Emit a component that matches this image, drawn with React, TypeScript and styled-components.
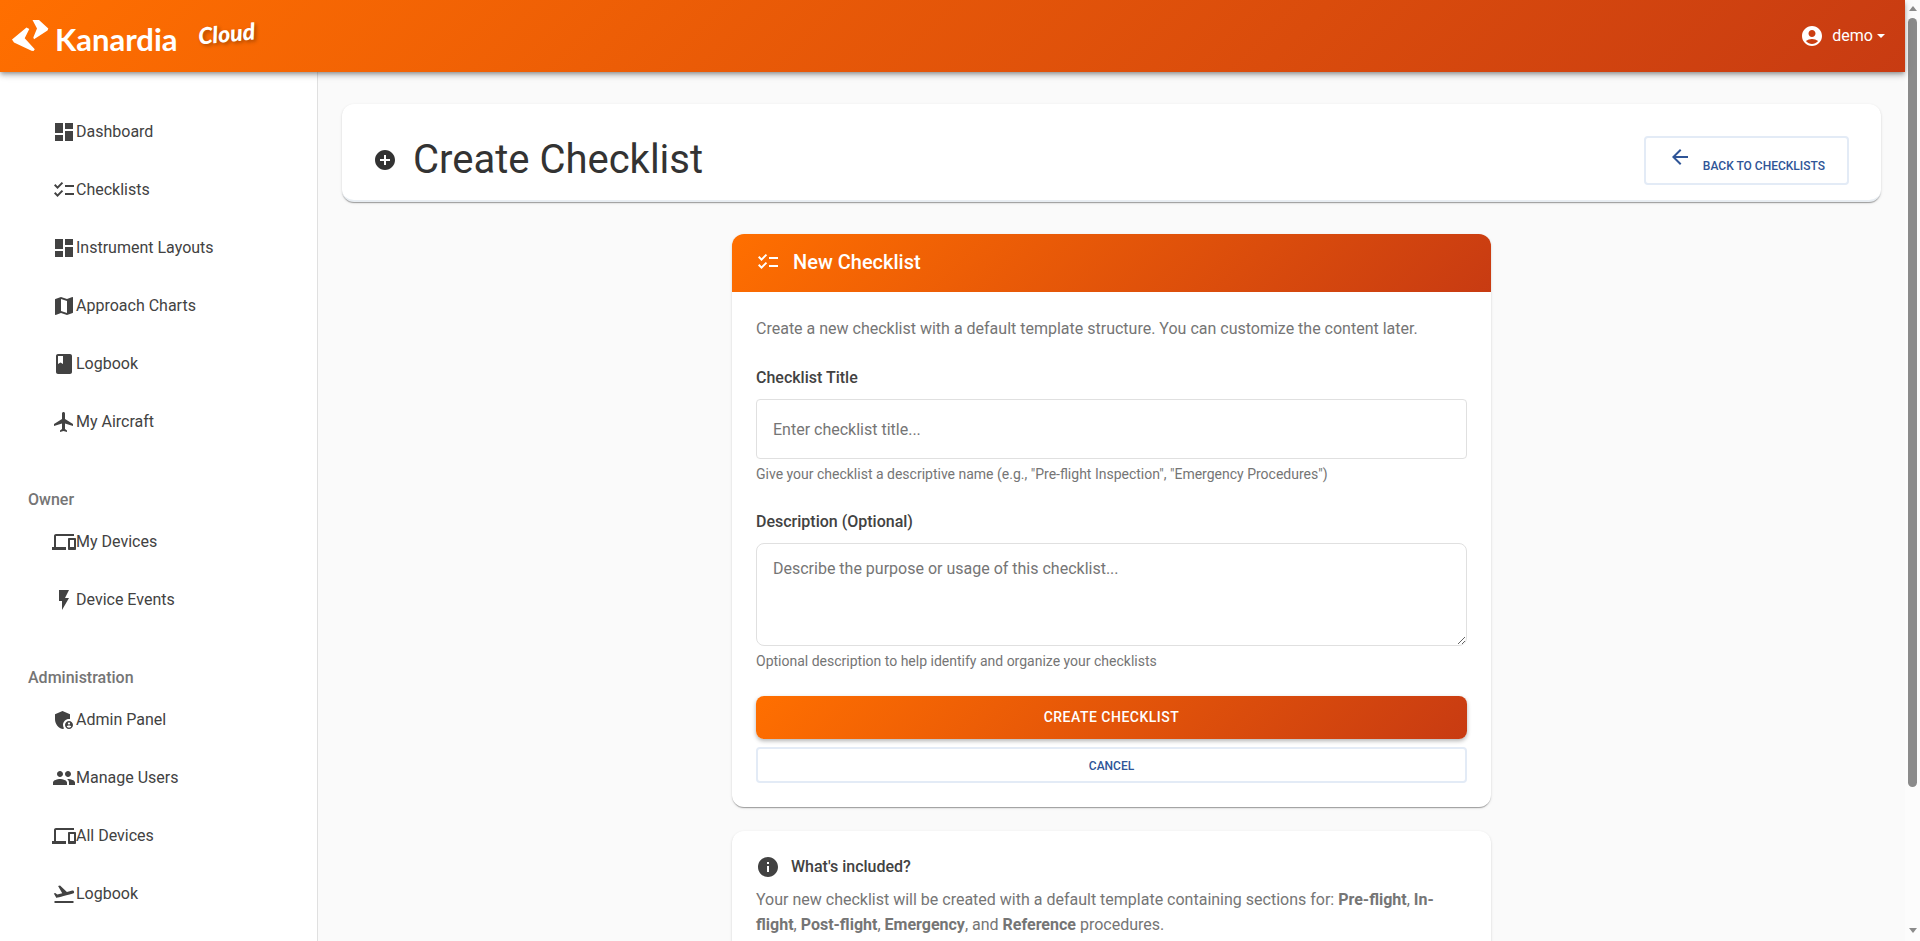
import React from "react";
import styled, { createGlobalStyle, css } from "styled-components";
import {
  MdAccountCircle,
  MdAddCircle,
  MdAdminPanelSettings,
  MdArrowBack,
  MdBook,
  MdChecklist,
  MdDashboard,
  MdDevices,
  MdFlashOn,
  MdFlight,
  MdFlightTakeoff,
  MdGroup,
  MdInfo,
  MdMap,
} from "react-icons/md";
import type { IconType } from "react-icons";

const colors = {
  gradient: "linear-gradient(135deg, #ff6f00 0%, #c83b12 100%)",
  page: "#fafafa",
  text: "#424242",
  heading: "#333333",
  muted: "#757575",
  line: "#e0e0e0",
  outline: "#e3ebf6",
  link: "#2f5597",
};

const GlobalStyle = createGlobalStyle`
  *, *::before, *::after { box-sizing: border-box; }
  body {
    margin: 0;
    background: ${colors.page};
    color: ${colors.text};
    font-family: Roboto, "Liberation Sans", sans-serif;
    font-size: 16px;
    line-height: 26px;
  }
  h1, h2, h3, p, ul { margin: 0; padding: 0; }
  svg { display: block; flex: none; }
`;

const Viewport = styled.div`
  display: grid;
  grid-template-columns: minmax(0, 1fr) 15px;
  height: 100vh;
  overflow: hidden;
`;

const Page = styled.div`
  display: flex;
  flex-direction: column;
  min-height: 0;
`;

const TopBar = styled.header`
  position: relative;
  z-index: 1;
  display: flex;
  flex: none;
  align-items: center;
  justify-content: space-between;
  height: 72px;
  padding: 0 20px 0 12px;
  background: ${colors.gradient};
  color: #fff;
  box-shadow: 0 2px 4px -1px rgba(0, 0, 0, 0.3), 0 4px 5px rgba(0, 0, 0, 0.14), 0 1px 10px rgba(0, 0, 0, 0.12);
`;

const Brand = styled.a`
  display: flex;
  align-items: center;
  color: inherit;
  text-decoration: none;
`;

const BrandName = styled.span`
  margin-left: 6px;
  padding-top: 6px;
  font-family: Lato, sans-serif;
  font-size: 31px;
  font-weight: 700;
  line-height: 36px;
`;

const BrandTag = styled.span`
  margin: 0 0 6px 20px;
  font-family: Lato, sans-serif;
  font-size: 23px;
  font-style: italic;
  font-weight: 900;
  line-height: 26px;
  text-shadow: 2px 2px 4px rgba(0, 0, 0, 0.3);
  transform: rotate(-5deg);
`;

const UserMenu = styled.button`
  display: flex;
  align-items: center;
  gap: 8px;
  padding: 0;
  border: 0;
  background: none;
  color: inherit;
  font: inherit;
`;

const Caret = styled.span`
  margin-left: -4px;
  border: 4px solid transparent;
  border-top-color: currentColor;
  border-bottom: 0;
`;

const Body = styled.div`
  display: grid;
  flex: 1;
  grid-template-columns: 318px minmax(0, 1fr);
  min-height: 0;
  overflow: hidden;
`;

const Sidebar = styled.nav`
  padding-top: 31px;
  border-right: 1px solid ${colors.line};
  background: #fff;
`;

const NavGroup = styled.section`
  & + & { padding-top: 36px; }
`;

const NavHeading = styled.h2`
  padding-left: 28px;
  color: ${colors.muted};
  font-size: 16px;
  font-weight: 500;
  line-height: 26px;
`;

const NavList = styled.ul`
  list-style: none;
`;

const NavLink = styled.a`
  display: flex;
  align-items: center;
  padding: 16px 52px;
  color: ${colors.text};
  text-decoration: none;
`;

const Main = styled.main`
  padding: 32px 24px;
`;

const surface = css`
  border-radius: 12px;
  background: #fff;
  box-shadow: 0 2px 1px -1px rgba(0, 0, 0, 0.2), 0 1px 1px rgba(0, 0, 0, 0.14), 0 1px 3px rgba(0, 0, 0, 0.12);
`;

const PageHeader = styled.header`
  ${surface}
  display: flex;
  align-items: center;
  justify-content: space-between;
  padding: 26px 32px 10px 31px;
  border-bottom: 2px solid #e8edf2;
`;

const PageTitle = styled.h1`
  display: flex;
  align-items: center;
  gap: 16px;
  color: ${colors.heading};
  font-size: 40px;
  font-weight: 400;
  line-height: 60px;
`;

const outlined = css`
  border: 2px solid ${colors.outline};
  border-radius: 4px;
  background: #fff;
  color: ${colors.link};
  font-family: inherit;
  font-size: 12px;
  font-weight: 500;
  text-transform: uppercase;
`;

const BackLink = styled.a`
  ${outlined}
  display: flex;
  gap: 11px;
  padding: 7px 22px;
  line-height: 20px;
  text-decoration: none;
  svg { margin-bottom: 5px; }
  span { padding-top: 11px; }
`;

const Column = styled.div`
  display: flex;
  flex-direction: column;
  gap: 24px;
  width: 100%;
  max-width: 759px;
  margin: 32px auto 0;
`;

const Card = styled.section`
  ${surface}
  overflow: hidden;
`;

const CardHeader = styled.h2`
  display: flex;
  align-items: center;
  gap: 13px;
  padding: 15px 24px 17px;
  background: ${colors.gradient};
  color: #fff;
  font-size: 20px;
  font-weight: 500;
  line-height: 26px;
`;

const CardBody = styled.div`
  padding: 24px;
`;

const Note = styled.p`
  color: ${colors.muted};
  line-height: 25px;
`;

const Form = styled.form`
  display: flex;
  flex-direction: column;
`;

const Field = styled.div`
  display: flex;
  flex-direction: column;
  margin-top: 24px;
`;

const Label = styled.label`
  margin-bottom: 8px;
  font-weight: 500;
`;

const control = css`
  display: block;
  width: 100%;
  border: 1px solid ${colors.line};
  background: #fff;
  color: ${colors.text};
  font: inherit;
  &::placeholder { color: ${colors.muted}; opacity: 1; }
`;

const TextInput = styled.input`
  ${control}
  height: 60px;
  padding: 0 16px;
  border-radius: 4px;
`;

const TextArea = styled.textarea`
  ${control}
  height: 103px;
  padding: 12px 16px;
  border-radius: 8px;
  resize: vertical;
`;

const Hint = styled.p`
  margin-top: 4px;
  color: ${colors.muted};
  font-size: 14px;
  line-height: 22px;
`;

const SubmitButton = styled.button`
  height: 43px;
  margin: 24px 0 8px;
  padding: 0 0 2px;
  border: 0;
  border-radius: 8px;
  background: ${colors.gradient};
  box-shadow: 0 2px 4px rgba(0, 0, 0, 0.3);
  color: #fff;
  font-family: inherit;
  font-size: 14px;
  font-weight: 500;
  letter-spacing: 0.5px;
  text-transform: uppercase;
`;

const CancelLink = styled.a`
  ${outlined}
  padding: 7px 0 5px;
  line-height: 20px;
  text-align: center;
  text-decoration: none;
`;

const InfoTitle = styled.h3`
  display: flex;
  align-items: center;
  gap: 11px;
  margin-bottom: 8px;
  font-size: 16px;
  font-weight: 500;
  line-height: 22px;
`;

const ScrollTrack = styled.div`
  display: flex;
  flex-direction: column;
  align-items: center;
  padding: 6px 0 8px;
  background: #fcfcfc;
`;

const ScrollArrow = styled.span<{ $down?: boolean }>`
  border: 4px solid transparent;
  border-bottom: 5px solid #8b8b8b;
  border-top: 0;
  transform: ${(p) => (p.$down ? "rotate(180deg)" : "none")};
`;

const ScrollRail = styled.div`
  flex: 1;
  padding: 7px 0 0;
`;

const ScrollThumb = styled.div`
  width: 9px;
  height: 84.5%;
  border-radius: 5px;
  background: #8b8b8b;
`;

interface NavItem {
  label: string;
  icon: IconType;
}

const navGroups: { heading?: string; items: NavItem[] }[] = [
  {
    items: [
      { label: "Dashboard", icon: MdDashboard },
      { label: "Checklists", icon: MdChecklist },
      { label: "Instrument Layouts", icon: MdDashboard },
      { label: "Approach Charts", icon: MdMap },
      { label: "Logbook", icon: MdBook },
      { label: "My Aircraft", icon: MdFlight },
    ],
  },
  {
    heading: "Owner",
    items: [
      { label: "My Devices", icon: MdDevices },
      { label: "Device Events", icon: MdFlashOn },
    ],
  },
  {
    heading: "Administration",
    items: [
      { label: "Admin Panel", icon: MdAdminPanelSettings },
      { label: "Manage Users", icon: MdGroup },
      { label: "All Devices", icon: MdDevices },
      { label: "Logbook", icon: MdFlightTakeoff },
    ],
  },
];

function LogoMark() {
  return (
    <svg width="37" height="34" viewBox="0 0 37 34" fill="#fff" aria-hidden="true">
      <path d="M0 20.500 L14.500 8.500 L17.300 10 L12.700 19.300 L22.800 30.300 L21.500 32 L19.500 31.800 L2 23.500 Z" />
      <path d="M20.500 1 L27 1 L36.300 9.500 L35.500 11.500 L22 20.300 L21.300 18.500 L25 9.500 Z" />
    </svg>
  );
}

export default function App() {
  return (
    <>
      <GlobalStyle />
      <Viewport>
        <Page>
          <TopBar>
            <Brand href="#">
              <LogoMark />
              <BrandName>Kanardia</BrandName>
              <BrandTag>Cloud</BrandTag>
            </Brand>
            <UserMenu type="button">
              <MdAccountCircle size={24} />
              demo
              <Caret />
            </UserMenu>
          </TopBar>
          <Body>
            <Sidebar>
              {navGroups.map((group, index) => (
                <NavGroup key={index}>
                  {group.heading && <NavHeading>{group.heading}</NavHeading>}
                  <NavList>
                    {group.items.map(({ label, icon: Icon }) => (
                      <li key={label}>
                        <NavLink href="#">
                          <Icon size={24} />
                          {label}
                        </NavLink>
                      </li>
                    ))}
                  </NavList>
                </NavGroup>
              ))}
            </Sidebar>
            <Main>
              <PageHeader>
                <PageTitle>
                  <MdAddCircle size={24} />
                  Create Checklist
                </PageTitle>
                <BackLink href="#">
                  <MdArrowBack size={24} />
                  <span>Back to Checklists</span>
                </BackLink>
              </PageHeader>
              <Column>
                <Card>
                  <CardHeader>
                    <MdChecklist size={24} />
                    New Checklist
                  </CardHeader>
                  <CardBody>
                    <Note>
                      Create a new checklist with a default template structure. You can customize the content later.
                    </Note>
                    <Form>
                      <Field>
                        <Label htmlFor="title">Checklist Title</Label>
                        <TextInput id="title" type="text" placeholder="Enter checklist title..." />
                        <Hint>
                          Give your checklist a descriptive name (e.g., "Pre-flight Inspection", "Emergency Procedures")
                        </Hint>
                      </Field>
                      <Field>
                        <Label htmlFor="description">Description (Optional)</Label>
                        <TextArea
                          id="description"
                          rows={3}
                          placeholder="Describe the purpose or usage of this checklist..."
                        />
                        <Hint>Optional description to help identify and organize your checklists</Hint>
                      </Field>
                      <SubmitButton type="submit">Create Checklist</SubmitButton>
                      <CancelLink href="#">Cancel</CancelLink>
                    </Form>
                  </CardBody>
                </Card>
                <Card>
                  <CardBody>
                    <InfoTitle>
                      <MdInfo size={24} />
                      What's included?
                    </InfoTitle>
                    <Note>
                      Your new checklist will be created with a default template containing sections for:{" "}
                      <strong>Pre-flight</strong>, <strong>In-flight</strong>, <strong>Post-flight</strong>,{" "}
                      <strong>Emergency</strong>, and <strong>Reference</strong> procedures.
                    </Note>
                  </CardBody>
                </Card>
              </Column>
            </Main>
          </Body>
        </Page>
        <ScrollTrack aria-hidden="true">
          <ScrollArrow />
          <ScrollRail>
            <ScrollThumb />
          </ScrollRail>
          <ScrollArrow $down />
        </ScrollTrack>
      </Viewport>
    </>
  );
}
